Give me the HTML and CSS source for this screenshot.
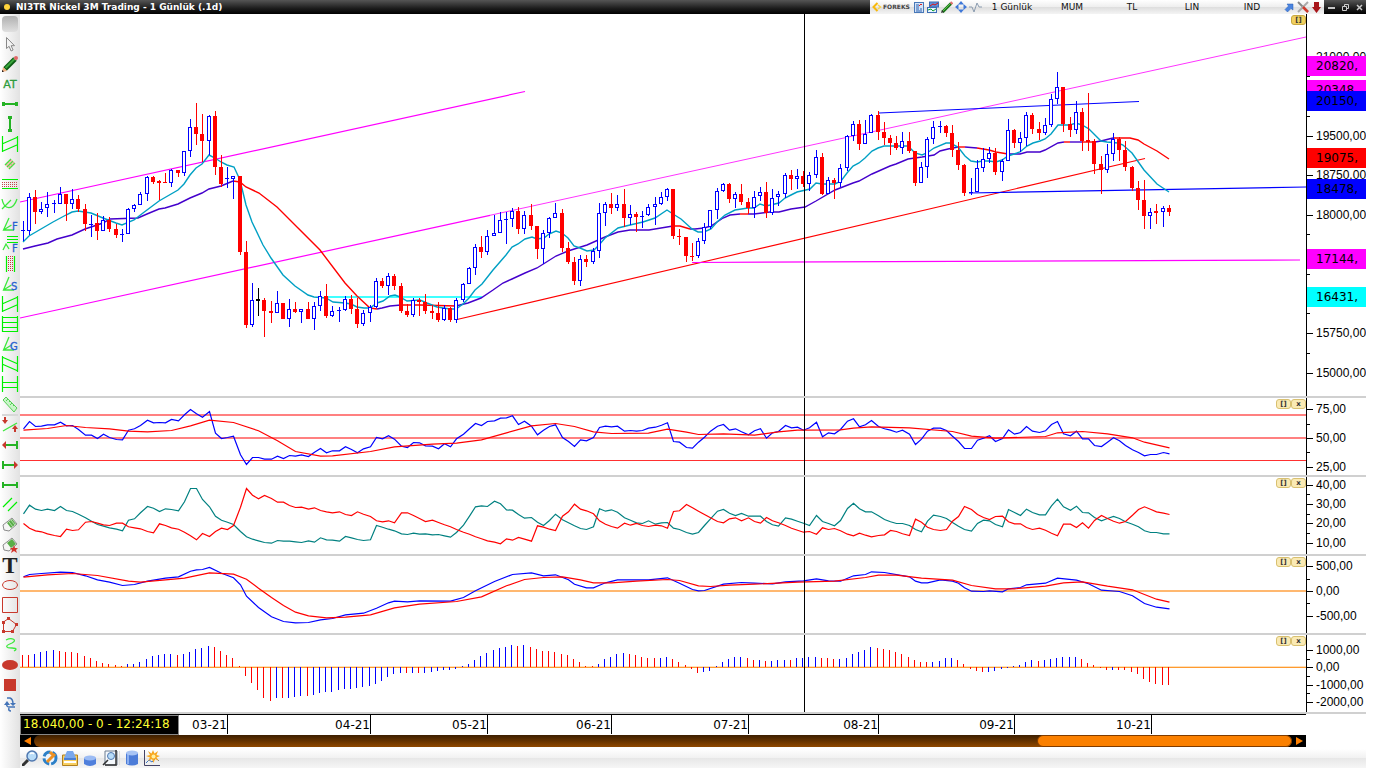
FILE: index.html
```html
<!DOCTYPE html>
<html lang="tr">
<head>
<meta charset="utf-8">
<title>NI3TR Nickel 3M Trading</title>
<link rel="stylesheet" href="styles.css">
</head>
<body>
<header class="titlebar">
  <span class="status-dot"></span>
  <h1 class="title">NI3TR Nickel 3M Trading - 1 Günlük (.1d)</h1>
  <div class="topbar">
    <div class="brand">
      <svg class="brand-mark" width="10" height="10" viewBox="0 0 10 10"><path d="M5.500 1L1.500 5l4 4" fill="none" stroke="#f7b90c" stroke-width="2"/><path d="M6 3l2.500 2L6 7" fill="none" stroke="#f7d24c" stroke-width="1.500"/></svg>
      <span class="brand-name">FOREKS</span>
    </div>
    <div class="topicons">
      <button class="topicon" aria-label="Grid"><svg width="12" height="12" viewBox="0 0 12 12"><rect x="1.500" y="1.500" width="9" height="10" fill="#d4e4f8" stroke="#4878b8"/><path d="M3 4h3M3 6h3M3 8h3M3 10h6M7 8h2" stroke="#2a60b0"/><path d="M6 5l2-2 1 1" stroke="#d22" fill="none"/></svg></button>
      <button class="topicon" aria-label="Charts"><svg width="12" height="12" viewBox="0 0 12 12"><rect x="2.500" y="1" width="9" height="5" fill="#5f90dc" stroke="#3c6cb4"/><path d="M3 5l3-2 2 1 3-2" stroke="#d11" fill="none"/><rect x=".5" y="6.500" width="9" height="5" fill="#e8f6ff" stroke="#3c6cb4"/><path d="M1 9l3-1 2 2 3-2" stroke="#17a030" fill="none"/></svg></button>
      <button class="topicon" aria-label="Pencil"><svg width="12" height="12" viewBox="0 0 12 12"><path d="M1.500 11L10 2.500" stroke="#187818" stroke-width="3"/><path d="M2 10l7-7" stroke="#5dc04a"/><path d="M0 12l1-3 2 2z" fill="#333"/><path d="M9.500 1l2 2" stroke="#e07070" stroke-width="2"/></svg></button>
      <button class="topicon" aria-label="Move"><svg width="12" height="12" viewBox="0 0 12 12"><path d="M6 0l3 3.500H3zM6 12l3-3.500H3zM0 6l3.500-3v6zM12 6L8.500 3v6z" fill="#3f78d8"/></svg></button>
      <button class="topicon" aria-label="Signal"><svg width="13" height="12" viewBox="0 0 13 12"><path d="M0 6h3l2 5L8 2l2 4h3" fill="none" stroke="#8b9cb0"/></svg></button>
    </div>
    <nav class="menus">
      <button class="menu">1 Günlük</button><button class="menu">MUM</button><button class="menu">TL</button><button class="menu">LIN</button><button class="menu">IND</button>
    </nav>
    <div class="topicons topicons-end">
      <button class="topicon" aria-label="Open"><svg width="11" height="12" viewBox="0 0 11 12"><path d="M3 3h6v6L7 7.500 3.500 11 1 8.500 4.500 5z" fill="#4a84e0" stroke="#2a5cb0" stroke-width=".5"/></svg></button>
      <button class="topicon" aria-label="Tools"><svg width="12" height="12" viewBox="0 0 12 12"><path d="M1 1l10 10" stroke="#888" stroke-width="2"/><path d="M11 1L1 11" stroke="#aaa" stroke-width="2"/><path d="M6 6l5 5" stroke="#d03a2c" stroke-width="2.500"/></svg></button>
      <button class="topicon" aria-label="Down"><svg width="11" height="12" viewBox="0 0 11 12"><path d="M3 1h5v5h2L5.500 12 1 6h2z" fill="#a8161a"/></svg></button>
    </div>
  </div>
  <div class="window-buttons">
    <button aria-label="Minimize"><svg width="9" height="9" viewBox="0 0 9 9"><path d="M1 5h7" stroke="#fff" stroke-width="1.500"/></svg></button>
    <button aria-label="Restore"><svg width="9" height="9" viewBox="0 0 9 9"><path d="M3.500 3V1.500h4v4H6M1.500 3.500h4v4h-4z" fill="none" stroke="#ccc"/></svg></button>
    <button aria-label="Close"><svg width="9" height="9" viewBox="0 0 9 9"><path d="M2 2l5 5M7 2L2 7" stroke="#ccc" stroke-width="1.500"/></svg></button>
  </div>
</header>

<div class="workspace">
<aside class="tools">
  <span class="grip"></span>
  <button class="tool" aria-label="Select"><svg viewBox="0 0 16 16"><path d="M4.500 1.500v11l2.600-2.200 2 4.700 2-1-2-4.300h3.400z" fill="#f4f4f4" stroke="#888"/></svg></button>
  <button class="tool" aria-label="Pencil"><svg viewBox="0 0 16 16"><path d="M3 13L13 3" stroke="#0d5c14" stroke-width="5"/><path d="M3.500 12L12.500 3" stroke="#3aa53c" stroke-width="2"/><path d="M0 16l1-5 4 4z" fill="#f0b080"/><path d="M0 16v-2l2 1.500z" fill="#111"/><path d="M12 1.500L14.500 4" stroke="#bbb" stroke-width="1.500"/><circle cx="14" cy="2" r="2" fill="#e06868"/></svg></button>
  <button class="tool" aria-label="Auto trend"><svg viewBox="0 0 16 16"><text x="8" y="12" text-anchor="middle" class="glyph-at">AT</text></svg></button>
  <button class="tool" aria-label="Horizontal line"><svg viewBox="0 0 16 16"><path d="M0 6h3v4H0zM13 6h3v4h-3zM3 7h10v2H3z" fill="#25b325"/></svg></button>
  <button class="tool" aria-label="Vertical line"><svg viewBox="0 0 16 16"><path d="M6 0h4v3H6zM6 13h4v3H6zM7 3h2v10H7z" fill="#25b325"/></svg></button>
  <button class="tool" aria-label="Channel"><svg viewBox="0 0 16 16"><path d="M.5 0v16M15.500 0v16M0 8L16 1M0 15.500L16 8.500" class="line"/></svg></button>
  <button class="tool" aria-label="Band"><svg viewBox="0 0 16 16"><path d="M3 9L9 3l4 4-6 6z" fill="#f8c8c0"/><path d="M3 9l6-6M5 11l6-6M7 13l6-6" class="soft"/><path d="M4 8l5 4M6 6l5 4M8 4l5 4" stroke="#e08080" stroke-dasharray="1 1"/></svg></button>
  <button class="tool" aria-label="Horizontal zone"><svg viewBox="0 0 16 16"><path d="M0 3.500h16M0 12.500h16" class="line"/><path d="M0 6.500h16M0 8.500h16M0 10.500h16" stroke="#c04a4a" stroke-dasharray="1 1"/></svg></button>
  <button class="tool" aria-label="Curve"><svg viewBox="0 0 16 16"><path d="M0 3c2 11 11 12 15 0M0 13L9 4" class="soft"/></svg></button>
  <button class="tool" aria-label="Fibonacci fan"><svg viewBox="0 0 16 16"><path d="M7 2L1.500 14H12M1.500 14l8-5" class="soft"/><text x="10" y="14" class="glyph-blue">F</text></svg></button>
  <button class="tool" aria-label="Fibonacci levels"><svg viewBox="0 0 16 16"><path d="M5 .5h11M5 3.500h11M5 6.500h11" class="line"/><path d="M1 14l3-6 3 5" class="soft"/><text x="10" y="16" class="glyph-blue">F</text></svg></button>
  <button class="tool" aria-label="Vertical zone"><svg viewBox="0 0 16 16"><path d="M4.500 0v16M12.500 0v16" class="line"/><path d="M6.500 0v16M8.500 0v16M10.500 0v16" stroke="#c83838" stroke-dasharray="1 1"/></svg></button>
  <button class="tool" aria-label="Speed lines"><svg viewBox="0 0 16 16"><path d="M7 1L1.500 14H12M1.500 14l8-5" class="soft"/><text x="9" y="14" class="glyph-blue">S</text></svg></button>
  <button class="tool" aria-label="Parallel channel"><svg viewBox="0 0 16 16"><path d="M.5 0v16M15.500 0v16M0 8L16 1M0 15.500L16 8.500" class="line"/></svg></button>
  <button class="tool" aria-label="Levels"><svg viewBox="0 0 16 16"><path d="M.5 0v16M15.500 0v16M0 1.500h16M0 6.500h16M0 11.500h16M0 15.500h16" class="line"/></svg></button>
  <button class="tool" aria-label="Gann fan"><svg viewBox="0 0 16 16"><path d="M7 1L1.500 14H12M1.500 14l8-5" class="soft"/><text x="8" y="14" class="glyph-blue">G</text></svg></button>
  <button class="tool" aria-label="Falling channel"><svg viewBox="0 0 16 16"><path d="M.5 0v16M15.500 0v16M0 1l16 7M0 8l16 7" class="line"/></svg></button>
  <button class="tool" aria-label="Range"><svg viewBox="0 0 16 16"><path d="M.5 0v16M15.500 0v16M0 6.500h16M0 11.500h16" class="line"/></svg></button>
  <button class="tool" aria-label="Ruler"><svg viewBox="0 0 16 16"><path d="M1 4l3-3 11 11-3 4z" fill="#c8f4c8" stroke="#56d056"/><path d="M6 3L4 5M8 5L7 6M10 7L8 9M12 9l-1 1" stroke="#56d056"/></svg></button>
  <span class="tool-rule"></span>
  <button class="tool" aria-label="Percent"><svg viewBox="0 0 16 16"><path d="M1 14L15 6" class="soft"/><path d="M2 0h2v3h2L3 7 0 3h2zM12 15h2v-3h2l-3-4-3 4h2z" fill="#c8382c"/></svg></button>
  <button class="tool" aria-label="Ray left"><svg viewBox="0 0 16 16"><path d="M4 7h10V4h2v8h-2V9H4z" fill="#25b325"/><path d="M0 8l4-4v8z" fill="#c8382c"/></svg></button>
  <button class="tool" aria-label="Ray right"><svg viewBox="0 0 16 16"><path d="M12 7H2V4H0v8h2V9h10z" fill="#25b325"/><path d="M16 8l-4-4v8z" fill="#c8382c"/></svg></button>
  <button class="tool" aria-label="Segment"><svg viewBox="0 0 16 16"><path d="M0 5h2v2h12V5h2v6h-2V9H2v2H0z" fill="#25b325"/></svg></button>
  <button class="tool" aria-label="Parallel lines"><svg viewBox="0 0 16 16"><path d="M1 10L10 1M6 14l9-9" class="line"/></svg></button>
  <button class="tool" aria-label="Erase"><svg viewBox="0 0 16 16"><path d="M1 8l9-7 5 6-8 7-5-1z" fill="#f6f6f6" stroke="#8c8c8c"/><path d="M5 6l5-4 4 5-5 4z" fill="#58ae48"/><path d="M7 5l4 5M9 3l4 5" stroke="#b8deb0"/></svg></button>
  <button class="tool" aria-label="Erase all"><svg viewBox="0 0 16 16"><path d="M1 8l9-7 5 6-8 7-5-1z" fill="#f6f6f6" stroke="#8c8c8c"/><path d="M5 6l5-4 4 5-5 4z" fill="#58ae48"/><path d="M12 8l1 3h3l-2 2 1 3-3-2-3 2 1-3-2-2h3z" fill="#d2342c"/></svg></button>
  <button class="tool" aria-label="Text"><svg viewBox="0 0 16 16"><text x="8" y="16" text-anchor="middle" class="glyph-text">T</text></svg></button>
  <button class="tool" aria-label="Ellipse"><svg viewBox="0 0 16 16"><ellipse cx="8" cy="8" rx="7.500" ry="4.500" fill="none" stroke="#c8382c"/></svg></button>
  <button class="tool" aria-label="Rectangle"><svg viewBox="0 0 16 16"><path d="M.5 .5h15v15H.5z" fill="none" stroke="#c8382c"/></svg></button>
  <button class="tool" aria-label="Polygon"><svg viewBox="0 0 16 16"><path d="M6.500 1.500l8 6-4 7h-9V5z" fill="none" stroke="#c8382c"/><path d="M5 0h3v3H5zM13 6h3v3h-3zM9 13h3v3H9zM0 13h3v3H0zM0 4h3v3H0z" fill="#c8382c"/></svg></button>
  <button class="tool" aria-label="Freehand"><svg viewBox="0 0 16 16"><path d="M4 3c6-3 12 0 6 3-8 3-6 5 0 5s4 2 2 3" class="soft"/></svg></button>
  <button class="tool" aria-label="Filled ellipse"><svg viewBox="0 0 16 16"><ellipse cx="8" cy="8" rx="8" ry="5" fill="#c8382c"/></svg></button>
  <button class="tool" aria-label="Filled rectangle"><svg viewBox="0 0 16 16"><path d="M2 2h12v12H2z" fill="#c8382c"/></svg></button>
  <button class="tool" aria-label="Refresh"><svg viewBox="0 0 16 16"><path d="M5 1h3q3 1 3 6M13 10H7q-3 0-2-4M7 11q-1 3 2 3" fill="none" stroke="#4474b8" stroke-width="1.500"/><path d="M8 6h6l-3 3zM2 8h6L5 4z" fill="#4474b8"/></svg></button>
</aside>

<main class="main">
  <div class="charts">
    <section class="panel" data-panel="price">
      <div class="plot"><svg preserveAspectRatio="none"></svg><div class="panel-buttons"><button class="strong">[]</button></div></div>
      <div class="axis"></div>
    </section>
    <section class="panel" data-panel="rsi">
      <div class="plot"><svg preserveAspectRatio="none"></svg><div class="panel-buttons"><button>[]</button><button>x</button></div></div>
      <div class="axis"></div>
    </section>
    <section class="panel" data-panel="di">
      <div class="plot"><svg preserveAspectRatio="none"></svg><div class="panel-buttons"><button>[]</button><button>x</button></div></div>
      <div class="axis"></div>
    </section>
    <section class="panel" data-panel="macd">
      <div class="plot"><svg preserveAspectRatio="none"></svg><div class="panel-buttons"><button>[]</button><button>x</button></div></div>
      <div class="axis"></div>
    </section>
    <section class="panel" data-panel="hist">
      <div class="plot"><svg preserveAspectRatio="none"></svg><div class="panel-buttons"><button>[]</button><button>x</button></div></div>
      <div class="axis"></div>
    </section>
  </div>
  <div class="timeline"><output class="quote">18.040,00 - 0 - 12:24:18</output></div>
  <div class="scrollbar">
    <button class="scroll-arrow" aria-label="Scroll left"><svg width="7" height="8" viewBox="0 0 7 8"><path d="M7 0v8L0 4z" fill="#ff8000"/></svg></button>
    <div class="track"><div class="thumb"></div></div>
    <button class="scroll-arrow" aria-label="Scroll right"><svg width="7" height="8" viewBox="0 0 7 8"><path d="M0 0v8l7-4z" fill="#ff8000"/></svg></button>
  </div>
  <footer class="footer">
    <button aria-label="Search"><svg viewBox="0 0 16 16"><path d="M0 16l6-6" stroke="#333" stroke-width="3"/><circle cx="10" cy="6" r="5" fill="#b8dcf8" stroke="#5078b0" stroke-width="1.500"/><path d="M8 4q2-2 4 0" stroke="#fff" fill="none" stroke-width="1.500"/></svg></button>
    <button aria-label="Refresh data"><svg viewBox="0 0 16 16"><circle cx="8" cy="8" r="6" fill="#eaf4ff" stroke="#2c80c8" stroke-width="3" stroke-dasharray="8 2"/><path d="M5 12L13 4M8 2l3 3" stroke="#ee9020" stroke-width="3"/></svg></button>
    <button aria-label="Mail"><svg viewBox="0 0 16 16"><path d="M.5 5h15v10.500H.5z" fill="#f8cf60" stroke="#b08020"/><path d="M5 1h6l3 7H2z" fill="#7aa8ec"/><path d="M2 8h12v2H2z" fill="#4c80d4"/><path d="M2 12h12" stroke="#fff" stroke-width="2"/></svg></button>
    <button aria-label="Small data"><svg viewBox="0 0 16 16"><path d="M2 8v6q6 4 12 0V8z" fill="#5080dc"/><ellipse cx="8" cy="8" rx="6" ry="2.500" fill="#9cbcf4"/></svg></button>
    <button aria-label="Preview"><svg viewBox="0 0 16 16"><path d="M3 1h12v14H3z" fill="#f4f8fc" stroke="#6c7c90"/><path d="M1 15l5-5M14 0v15H3" stroke="#333" stroke-width="1.500" fill="none"/><circle cx="9" cy="6" r="3.500" fill="#b8dcf8" stroke="#5078b0"/></svg></button>
    <span class="footer-rule"></span>
    <button aria-label="Database"><svg viewBox="0 0 16 16"><path d="M2 3v11q6 3 12 0V3z" fill="#4c7cd8"/><path d="M4 4v10" stroke="#8cb0f0" stroke-width="2"/><ellipse cx="8" cy="3" rx="6" ry="2.500" fill="#a8c4f4"/></svg></button>
    <button aria-label="Highlights"><svg viewBox="0 0 16 16"><path d="M.5 0v15.500H16" stroke="#446" fill="none"/><path d="M2 13l3-3 3 2 4-4 3 3" stroke="#3c78c8" fill="none"/><path d="M9 0l1.500 3.500L14 1l-1.500 4L16 6l-3.500 1.500L15 11l-4-2-1.500 4L8 9l-4 2 2-3.500L2 6l4-1-2-4 3.500 2.500z" fill="#f8a820"/><circle cx="9.500" cy="6.500" r="2" fill="#fff0a0"/></svg></button>
  </footer>
</main>
</div>
<script src="charts.js"></script>
</body>
</html>
```
FILE: styles.css
```css
* { box-sizing: border-box; }
body {
  margin: 0;
  padding-right: 14px;
  height: 100vh;
  display: flex;
  flex-direction: column;
  overflow: hidden;
  background: #fff;
  font-family: "DejaVu Sans", sans-serif;
  font-size: 12px;
  color: #000;
}
button {
  display: flex;
  align-items: center;
  justify-content: center;
  margin: 0;
  padding: 0;
  border: 0;
  background: none;
  font: inherit;
  color: inherit;
}
svg { display: block; }

/* Title bar */
.titlebar {
  flex: none;
  height: 14px;
  display: flex;
  align-items: center;
  background: linear-gradient(#555, #1c1c1c 60%, #000);
}
.status-dot {
  width: 6px;
  height: 6px;
  margin: 0 6px 0 4px;
  border-radius: 50%;
  background: #ffd43c;
}
.title {
  flex: 1;
  margin: 0;
  font-size: 9px;
  line-height: 14px;
  font-weight: bold;
  color: #fff;
  white-space: nowrap;
}
.topbar {
  display: flex;
  align-items: center;
  height: 14px;
  background: linear-gradient(#fff, #eee 50%, #ddd 50%, #f4f4f4);
}
.brand { display: flex; align-items: center; gap: 1px; width: 43px; padding-left: 2px; }
.brand-name { font-size: 6px; line-height: 14px; font-weight: bold; color: #444; }
.topicons { display: flex; align-items: center; gap: 2px; }
.topicons-end { padding: 0 2px; }
.menus { display: flex; }
.menu { width: 60px; height: 14px; font-size: 9px; color: #111; }
.window-buttons { display: flex; gap: 5px; width: 42px; padding-left: 3px; }

/* Drawing tools */
.workspace { flex: 1; min-height: 0; display: flex; }
.tools {
  flex: none;
  width: 20px;
  padding: 2px 2px 0;
  background: linear-gradient(90deg, #fff, #e2e2e2);
}
.grip {
  display: block;
  height: 16px;
  margin-bottom: 2px;
  border-radius: 4px;
  background: linear-gradient(#b0b0b0, #e0e0e0);
}
.tool { width: 16px; height: 20px; }
.tool svg { width: 16px; height: 16px; overflow: visible; }
.tool-rule { display: block; height: 2px; margin-bottom: -1px; background: #d8d8d8; }
.line { fill: none; stroke: #00f000; stroke-width: 1.2; }
.soft { fill: none; stroke: #3ce83c; stroke-width: 1.3; }
.glyph-at { font: 11px "DejaVu Sans", sans-serif; fill: #2e9c3c; stroke: #2e9c3c; stroke-width: .3; }
.glyph-blue { font: 10px "DejaVu Sans", sans-serif; fill: #2860d0; stroke: #2860d0; stroke-width: .3; }
.glyph-text { font: bold 23px "Liberation Serif", serif; fill: #222; }

/* Charts */
.main { flex: 1; min-width: 0; display: flex; flex-direction: column; }
.charts {
  flex: 1;
  min-height: 0;
  display: grid;
  grid-template-rows: minmax(0, 384fr) repeat(4, minmax(0, 79fr));
}
.panel {
  display: grid;
  grid-template-columns: minmax(0, 1fr) 60px;
  grid-template-rows: minmax(0, 1fr);
  border-bottom: 2px solid #d0d0d0;
}
.plot { position: relative; }
.plot svg { width: 100%; height: 100%; }
.panel-buttons { position: absolute; top: 1px; right: 0; display: flex; }
.panel-buttons button {
  width: 15px;
  height: 10px;
  border: 1px solid #d8c070;
  border-radius: 3px;
  background: #faeab4;
  font-size: 7px;
  line-height: 8px;
  font-weight: bold;
  color: #333;
}
.panel-buttons .strong { border-color: #c8a840; background: #f0d060; }
.axis {
  position: relative;
  overflow: hidden;
  border-left: 1px solid #000;
  font-family: "Liberation Sans", sans-serif;
}
.tick { position: absolute; left: 0; width: 3px; height: 1px; background: #000; }
.tick-major { width: 6px; }
.tick-label { position: absolute; left: 9px; line-height: 14px; margin-top: -7px; white-space: nowrap; }
.tag {
  position: absolute;
  left: 0;
  right: 0;
  height: 20px;
  padding-left: 9px;
  line-height: 20px;
  font-family: "DejaVu Sans", sans-serif;
}
.up { fill: #00f; }
.down { fill: #f00; }
.flat { fill: #000; }
.hollow { fill: #fff; stroke: #00f; }

/* Timeline, scrollbar, footer */
.timeline {
  flex: none;
  position: relative;
  height: 21px;
  margin-right: 60px;
  border-top: 1px solid #000;
}
.quote {
  display: block;
  width: 159px;
  height: 20px;
  padding-left: 2px;
  border: 1px solid #888;
  background: #000;
  color: #ff3;
  line-height: 17px;
  white-space: nowrap;
}
.month {
  position: absolute;
  top: 0;
  width: 40px;
  height: 19px;
  margin-left: -39px;
  border-right: 1px solid #000;
  text-align: right;
  line-height: 21px;
}
.scrollbar {
  flex: none;
  display: flex;
  height: 12px;
  margin-right: 60px;
  background: #000;
}
.scroll-arrow { width: 14px; height: 12px; }
.track { flex: 1; border-radius: 6px; background: linear-gradient(#3c1e00, #904800); }
.thumb { width: 20.3%; height: 12px; margin-left: auto; border: 1px solid #803c00; border-radius: 6px; background: #fb8000; }
.footer {
  flex: none;
  display: flex;
  align-items: center;
  gap: 4px;
  height: 21px;
  padding: 1px 0 0 2px;
  background: linear-gradient(#fff 10%, #f2f2f2 50%, #e6e6e6 50%, #f6f6f6);
}
.footer svg { width: 16px; height: 16px; }
.footer-rule { width: 1px; height: 14px; margin-left: -3px; background: #ddd; }
```
FILE: charts.js
```javascript
const PLOT_WIDTH = 1286;
const CURSOR_X = 784;
const COUNT = 186;
const barX = i => Math.floor(3.2 + 6.195 * i);

// One entry per bar: direction, high, body top, body bottom, low.
const candles = `
u221 230 231 241|u193 197 231 235|d190 197 212 224|u202 209 212 214|u192 204 208 217|u200 203 204 213|u187 194 204 204|d194 194 204 221|u189 199 204 209|d195 199 209 212
d204 209 224 231|u215 224 225 237|d213 223 231 240|u216 220 231 231|d217 220 229 232|d224 229 235 238|u229 234 235 242|u208 209 234 234|u204 205 209 212|u192 194 205 205
u176 177 194 201|d176 177 182 184|d180 181 183 200|d173 182 183 183|u169 170 183 187|d170 170 173 177|u151 151 173 176|u119 127 151 157|d103 127 134 145|d114 134 141 162
u115 116 141 155|d111 116 167 175|d155 167 184 187|u167 178 179 188|u176 176 179 199|d176 176 252 255|d241 252 325 328|u283 300 325 327|f288 299 301 316|d298 300 311 337
d301 311 313 323|u291 303 313 313|d303 303 319 319|u299 309 319 327|d302 309 312 313|u309 309 312 323|d302 309 319 319|u302 306 319 330|u291 296 306 311|d284 296 316 318
u306 311 316 317|u307 310 311 322|u296 299 310 311|d295 299 309 314|d298 309 324 328|u310 313 324 326|u305 307 313 322|u278 281 307 308|d278 281 286 288|u273 276 286 295
d274 276 286 290|d283 286 311 313|d304 311 315 317|u298 300 315 317|d298 300 302 316|d294 302 311 314|d305 311 313 319|d302 313 320 322|u305 308 320 321|d307 308 320 322
u298 300 320 323|u283 284 300 302|u267 268 284 284|u244 247 268 275|d236 247 252 258|u230 236 252 255|u215 233 236 236|u212 220 233 233|u212 219 220 244|u208 211 219 227
d207 211 229 234|u211 215 229 234|d204 215 226 230|d226 226 249 259|u230 233 249 264|u217 218 233 238|u203 213 218 218|d209 213 248 252|d242 248 262 264|d257 262 281 285
u255 259 281 286|d255 259 262 267|u248 251 262 264|u203 213 251 258|u202 204 213 226|d193 204 208 214|u195 204 208 211|d189 204 218 227|u205 214 218 225|d212 214 217 232
u211 216 217 228|u204 207 215 216|u197 204 207 225|u192 197 204 205|u188 189 197 201|d189 189 236 239|d229 236 237 245|d237 237 256 262|d243 256 257 261|u238 241 256 258
u223 227 241 244|u210 210 227 229|u188 191 210 219|u183 184 191 192|d183 184 199 203|u192 194 199 208|d184 194 202 205|d198 202 208 214|u191 197 208 218|u187 192 196 201
d182 192 213 218|u189 198 213 215|u191 194 197 206|u173 175 194 198|d170 175 179 190|u169 176 179 189|d171 176 184 187|u172 175 184 191|u150 157 175 178|d153 157 194 195
u177 180 194 194|d178 180 183 199|u164 168 183 187|u135 136 168 171|u121 124 136 141|d120 124 144 150|u120 134 144 144|u114 115 133 133|d111 115 132 140|d122 132 138 145
d135 138 143 155|d136 143 148 150|u132 141 148 154|d132 141 151 153|d151 151 183 186|u162 167 183 183|u137 139 167 178|u121 127 139 144|u121 126 127 133|d125 126 133 137
d125 133 150 157|d142 150 165 170|d164 165 193 196|u178 192 193 195|u160 168 192 192|u148 159 168 172|u147 153 159 163|d148 153 172 175|u159 161 172 181|u119 130 161 161
d129 130 143 148|u132 138 143 152|u112 115 138 146|d113 115 129 134|d122 129 133 140|u118 125 133 135|u94 99 125 127|u72 87 99 104|d87 87 124 132|d117 124 130 137
u101 112 130 134|d108 112 141 151|d93 140 142 151|d139 141 164 174|d156 164 170 194|u144 154 170 173|u133 139 154 161|d137 139 150 161|d141 150 167 171|d166 167 188 191
d181 188 200 210|d180 200 216 229|u208 212 216 229|d204 211 213 224|u206 208 212 227|d205 208 212 216
`.trim().split(/[|\n]/);

const fastAverage = "23,242 29,236 41,229 53,222 66,215 72,212 78,211 91,213 103,218 116,223 122,225 134,220 143,213 147,210 159,201 178,190 184,184 190,175 196,168 202,164 209,155 215,158 221,162 227,165 234,167 240,180 246,205 252,222 263,245 271,258 283,275 295,286 308,295 314,297 326,298 333,302 345,303 351,304 357,307 364,308 370,308 377,303 383,301 390,296 395,295 400,297 407,301 420,300 427,303 437,307 450,309 456,309 463,304 469,298 475,290 482,284 493,270 506,255 512,247 518,244 525,239 532,237 537,239 544,238 549,234 556,231 562,233 568,238 574,246 580,248 587,251 594,250 599,245 605,238 618,228 630,225 643,222 655,218 667,210 673,214 681,219 692,229 698,232 704,232 711,229 717,222 725,215 735,210 748,208 754,208 760,204 766,206 779,203 785,198 791,195 797,192 810,189 816,183 822,184 835,184 841,181 847,173 853,166 859,163 865,158 872,151 878,148 884,146 908,146 915,153 922,155 927,153 934,148 946,143 950,143 958,147 965,156 971,161 977,162 983,161 989,161 996,162 1002,160 1008,156 1014,154 1020,152 1027,146 1033,143 1040,141 1045,139 1051,134 1058,125 1070,125 1076,123 1082,125 1089,129 1101,141 1107,142 1118,143 1123,145 1132,153 1144,170 1157,184 1169,192";

// The slow average is drawn indigo while it rises and red while it falls.
const slowRising = [
  "23,249 35,246 48,243 57,239 72,235 85,229 103,223 110,219 138,218 147,214 159,209 165,208 178,204 190,198 202,193 209,189 221,186 233,181",
  "377,309 382,308 390,306 401,305", "456,306 468,303 481,298 493,290 503,283 512,279 525,273 537,268 556,256 568,251 587,245 605,237 618,232 630,230 649,230 667,227 673,226",
  "690,229 695,229 704,228 711,226 723,218 730,215 740,214", "748,214 754,214 770,212 779,212 791,209 805,207 816,201 835,190 853,183 859,181 872,174 890,166 896,164 908,159 922,157 934,155 940,151 948,149 958,147",
  "965,147 977,148", "1008,154 1020,154 1027,152 1040,152 1045,150 1058,143 1064,142", "1070,142 1082,142", "1095,142 1101,141 1113,138"
];
const slowFalling = [
  "233,181 240,182 246,187 259,193 277,207 290,220 320,250 345,283 357,296 370,308 377,309", "401,305 420,305 456,306", "673,226 680,226 690,229",
  "740,214 748,214", "958,147 965,147", "977,148 989,150 996,152 1008,154", "1064,142 1070,142", "1082,142 1095,142",
  "1113,138 1120,138 1130,138 1138,140 1144,144 1157,151 1169,159"
];

// Indicator readings in thirds of a plot unit; "bar:value" lists are sparse.
const rsi = [100,78,93,92,88,88,80,91,90,102,119,119,129,116,126,132,133,104,100,90,74,82,81,82,72,76,58,42,55,65,48,113,129,126,122,178,207,186,186,191,191,182,189,180,182,178,183,170,159,172,166,166,154,162,172,160,154,126,130,121,131,152,156,141,142,151,152,160,145,154,130,116,100,84,90,78,76,68,67,61,87,77,92,118,104,93,88,126,138,153,133,136,126,96,92,94,92,107,105,107,105,98,95,89,82,138,140,156,158,140,125,107,92,87,104,100,109,118,106,100,128,112,108,90,97,95,104,97,80,124,112,115,102,77,70,94,88,75,93,100,104,110,104,116,147,131,107,98,98,105,122,138,159,159,134,128,121,138,129,103,116,111,93,107,111,106,87,78,115,121,107,130,130,150,153,140,127,136,150,163,171,181,177,177,171,175];
const rsiAverage = "0:104 4:99 7:90 10:96 14:100 17:107 20:109 24:105 27:91 30:74 34:81 38:106 41:136 44:168 48:182 50:181 56:168 60:154 66:146 70:143 74:133 78:112 82:91 86:84 89:93 92:109 95:114 101:113 104:101 107:110 109:117 113:115 118:119 122:109 125:104 132:103 134:98 137:94 143:97 150:108 153:122 157:128 165:123 167:112 171:108 175:115 179:127 181:140 185:157";
const plusDi = [355,329,341,345,341,345,333,345,348,356,367,377,387,392,397,401,406,374,370,352,333,338,348,340,342,346,319,279,279,312,334,362,374,380,387,408,424,431,436,441,443,435,437,437,439,441,436,440,427,433,434,437,423,427,432,435,433,390,395,401,406,415,417,413,416,415,418,417,421,425,411,389,362,334,331,333,317,325,343,344,357,368,366,380,390,375,356,373,382,391,399,402,394,340,347,343,350,367,374,382,384,376,386,382,381,398,402,411,416,411,390,370,347,342,353,360,354,362,362,362,378,388,392,367,371,377,383,390,360,378,384,391,375,339,323,340,349,349,361,372,379,384,384,390,402,409,377,359,363,369,381,392,402,407,384,374,376,387,394,342,351,360,341,351,358,358,331,311,334,344,332,351,352,366,376,369,363,369,379,386,394,406,411,411,415,415];
const minusDi = [384,398,406,409,415,420,423,401,405,403,380,378,383,388,390,383,383,394,397,400,408,412,385,390,397,401,410,421,433,414,423,408,398,402,390,335,279,299,310,300,309,320,320,330,336,335,341,337,345,349,352,349,357,360,349,356,363,376,379,376,382,352,352,360,369,378,374,381,388,394,402,410,416,424,430,436,440,445,430,434,426,431,437,391,395,401,405,362,349,326,341,346,355,376,386,393,398,383,389,384,390,393,389,391,398,348,346,327,337,347,357,367,378,382,370,367,376,367,378,383,366,376,382,390,398,404,410,408,416,397,402,399,406,416,421,413,419,424,420,418,405,408,415,420,371,380,395,402,405,402,377,363,333,342,357,366,372,363,362,379,385,385,396,402,398,404,413,421,386,386,396,382,398,375,360,369,377,383,378,359,342,334,341,349,353,357];
const macd = "0:544 1:537 3:534 6:530 8:531 10:541 12:553 14:560 16:570 18:567 20:557 23:548 25:544 27:527 28:523 29:522 30:516 32:533 34:547 35:568 36:602 38:636 40:664 42:678 44:682 46:681 48:673 50:669 52:658 55:653 57:638 59:622 60:617 62:619 64:616 69:617 71:606 73:586 76:558 79:537 82:532 84:541 86:538 88:553 89:566 91:577 92:577 93:569 94:562 96:553 101:553 104:547 106:563 108:582 109:586 110:585 113:566 116:561 118:563 121:565 123:559 126:556 128:550 130:556 132:557 134:541 136:537 137:529 139:531 143:544 144:557 145:562 146:562 148:553 150:557 151:563 152:577 153:587 155:588 156:586 158:589 159:580 161:576 162:568 165:563 167:548 170:554 172:565 174:584 177:588 179:601 181:624 183:635 185:640";
const macdSignal = "0:545 4:538 8:534 12:540 17:557 19:560 23:553 26:548 30:532 34:536 36:551 38:578 40:606 42:630 44:650 46:661 49:667 52:665 56:658 60:637 64:626 70:618 74:604 78:571 81:552 84:546 87:544 90:553 92:562 95:562 99:557 104:552 106:555 109:571 111:573 114:569 118:566 125:560 131:557 136:546 138:539 141:539 145:548 150:554 153:570 157:580 160:580 165:572 168:562 171:559 175:572 179:583 181:597 183:611 185:620";
const momentum = "12d 12d 13u 15u 16u 17u 16d 15d 15d 14d 11d 9d 6d 4d 3d 2d 1d 3u 3u 5u 8u 11u 12u 13u 13u 12d 13u 15u 18u 19u 21u 20d 16d 12d 9d 1d -9d -16d -23d -31d -34d -31u -31d -31u -30u -29u -29d -28u -26u -25u -25u -23u -22u -22u -21u -20u -19u -17u -14u -10u -7u -6u -6d -6u -6d -6u -5u -4u -3u -3u -2u 1u 3u 7u 11u 14u 17u 19u 20u 22u 21d 22u 20d 18d 16d 16d 15d 13d 12d 8d 5d 1d 1d 3u 8u 10u 13u 14u 13d 12d 10d 9d 9d 9u 10u 8d 5d 2d -2d -6d -5u -4u 1u 5u 8u 10u 10u 9d 7d 7u 6d 6u 7u 7u 7d 9u 9u 10u 10u 9d 9d 8d 8u 9u 13u 15u 17u 20u 19d 18d 17d 15d 13d 10d 7d 5d 5d 5u 6u 9u 9u 7d 3d -2d -4d -5d -5u -4u -2u -1u 1u 2u 5u 7u 6d 7u 8u 9u 10u 10u 10u 8d 4d 2d -1d -3d -3u -3d -3d -5d -7d -12d -15d -17d -18d -18d".split(" ");

const line = (x1, y1, x2, y2, color, width = 1) =>
  `<line x1="${x1}" y1="${y1}" x2="${x2}" y2="${y2}" stroke="${color}" stroke-width="${width}"/>`;
const poly = (points, color, width = 1) =>
  `<polyline points="${points}" fill="none" stroke="${color}" stroke-width="${width}"/>`;
const rect = (x, y, w, h, cls) =>
  `<rect x="${x}" y="${y}" width="${w}" height="${h}" class="${cls}"/>`;
const hline = (y, color, width = 1) => line(0, y, PLOT_WIDTH, y, color, width);
const series = (data, top, color) => {
  const pairs = Array.isArray(data) ? data.map((v, i) => [i, v]) : data.split(" ").map(p => p.split(":").map(Number));
  return poly(pairs.map(([i, v]) => `${barX(i) + 0.5},${(v / 3 - top + 0.5).toFixed(1)}`).join(" "), color, 1.2);
};

function drawCandle(text, i) {
  const kind = { u: "up", d: "down", f: "flat" }[text[0]];
  const [high, top, bottom, low] = text.slice(1).split(" ").map(Number);
  const x = barX(i);
  const wick = rect(x, high, 1, Math.max(1, low - high), kind);
  const body = kind === "up" && bottom - top > 1
    ? `<rect x="${x - 1.5}" y="${top + 0.5}" width="3" height="${bottom - top - 1}" class="hollow"/>`
    : rect(x - 2, top, 4, bottom - top, kind);
  return wick + body;
}

const priceDrawing = () => `<g transform="translate(0 -14)">
  <g transform="translate(-20 0)">
  ${line(20, 202, 525, 91.5, "#f0f", 1.2)}${line(20, 318, 490, 215.3, "#f0f", 1.2)}${line(490, 215.3, 1306, 37, "#f0f", 0.8)}
  ${line(457, 319.5, 1145, 158.5, "#f00", 1.1)}${line(692, 262.5, 1300, 260, "#f0f", 1.2)}${line(325, 297, 482, 297, "#40ffff", 2)}
  ${line(879, 113, 1139, 101.5, "#00f")}${line(969, 193, 1306, 187, "#00f", 1.2)}
  ${slowRising.map(p => poly(p, "#4400cc", 1.4)).join("")}${slowFalling.map(p => poly(p, "#f00", 1.4)).join("")}
  ${poly(fastAverage, "#00a0c4", 1.4)}
  </g>
  <g shape-rendering="crispEdges">${candles.map(drawCandle).join("")}</g></g>`;

const momentumBars = momentum.slice(0, COUNT).map((entry, i) => {
  const v = parseInt(entry, 10);
  return rect(barX(i) - 1, v > 0 ? 32 - v : 32, 1, Math.abs(v), entry.endsWith("u") ? "up" : "down");
}).join("");

const panels = {
  price: {
    height: 382, draw: priceDrawing,
    major: [[43, "21000,00"], [122, "19500,00"], [161, "18750,00"], [201, "18000,00"], [319, "15750,00"], [359, "15000,00"]],
    minor: [62, 102, 181, 220, 260, 299, 339],
    tags: [[42, "20820,", "#f0f"], [66, "20348", "#f0f"], [77, "20150,", "#00f"], [134, "19075,", "#f00"], [165, "18478,", "#00f"], [235, "17144,", "#f0f"], [273, "16431,", "#0ff"]]
  },
  rsi: {
    height: 77, major: [[11, "75,00"], [40, "50,00"], [69, "25,00"]], minor: [26, 54],
    draw: () => hline(17, "#ff8080", 2) + hline(40, "#ff8080", 2) + hline(62.5, "#ff3030", 1) + series(rsi, 3, "#00f") + series(rsiAverage, 3, "#f00")
  },
  di: {
    height: 77, major: [[8, "40,00"], [27, "30,00"], [46, "20,00"], [66, "10,00"]], minor: [17, 37, 56],
    draw: () => series(plusDi, 82, "#008080") + series(minusDi, 82, "#f00")
  },
  macd: {
    height: 77, major: [[10, "500,00"], [35, "0,00"], [60, "-500,00"]], minor: [23, 47],
    draw: () => hline(35, "#ffb870", 2) + series(macd, 161, "#00f") + series(macdSignal, 161, "#f00")
  },
  hist: {
    height: 77, major: [[15, "1000,00"], [32, "0,00"], [50, "-1000,00"], [67, "-2000,00"]], minor: [24, 41, 58],
    draw: () => hline(31.5, "#ffe0b8") + hline(32.5, "#ff9a30") + `<g shape-rendering="crispEdges">${momentumBars}</g>`
  }
};

for (const section of document.querySelectorAll(".panel")) {
  const p = panels[section.dataset.panel];
  const pct = y => (y / p.height * 100).toFixed(3) + "%";
  const svg = section.querySelector(".plot svg");
  svg.setAttribute("viewBox", `0 0 ${PLOT_WIDTH} ${p.height}`);
  svg.innerHTML = p.draw() + `<rect x="${CURSOR_X}" y="0" width="1" height="${p.height}"/>`;
  section.querySelector(".axis").innerHTML =
    p.minor.map(y => `<i class="tick" style="top:${pct(y)}"></i>`).join("") +
    p.major.map(([y, text]) => `<i class="tick tick-major" style="top:${pct(y)}"></i><span class="tick-label" style="top:${pct(y)}">${text}</span>`).join("") +
    (p.tags || []).map(([y, text, color]) => `<span class="tag" style="top:${pct(y)};background:${color}">${text}</span>`).join("");
}

const months = [[207, "03-21"], [350, "04-21"], [467, "05-21"], [591, "06-21"], [728, "07-21"], [858, "08-21"], [994, "09-21"], [1131, "10-21"]];
document.querySelector(".timeline").insertAdjacentHTML("beforeend",
  months.map(([x, text]) => `<span class="month" style="left:${(x / PLOT_WIDTH * 100).toFixed(3)}%">${text}</span>`).join(""));
```
